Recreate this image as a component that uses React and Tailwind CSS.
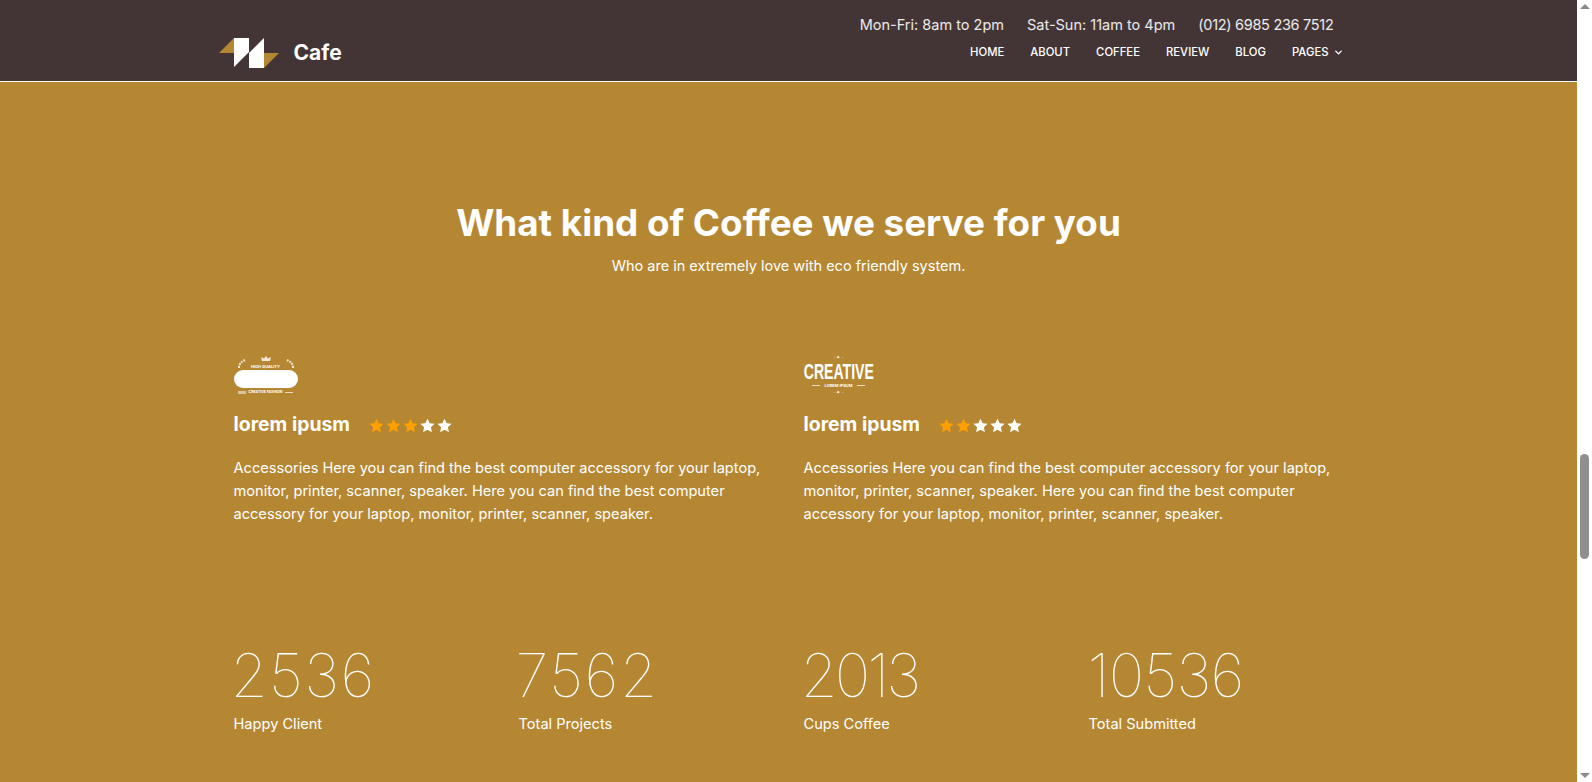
import React from 'react';
import { ChevronDown } from 'lucide-react';

const font = "font-['Inter','Liberation_Sans',sans-serif]";
const nav = ['HOME', 'ABOUT', 'COFFEE', 'REVIEW', 'BLOG'];
const stats = [
  ['2536', 'Happy Client', '-ml-[3px] tracking-[1.3px]'],
  ['7562', 'Total Projects', '-ml-[3px] tracking-[1.5px]'],
  ['2013', 'Cups Coffee', '-ml-[3px] tracking-[-3px]'],
  ['10536', 'Total Submitted', '-ml-[1px] tracking-[-0.8px]'],
];
const text =
  'Accessories Here you can find the best computer accessory for your laptop, monitor, printer, scanner, speaker. Here you can find the best computer accessory for your laptop, monitor, printer, scanner, speaker.';

function Logo() {
  return (
    <svg width="60" height="30" viewBox="0 0 60 30">
      <polygon points="0,15 15,0 15,15" fill="#b58733" />
      <polygon points="15,0 30,0 30,14 15,29" fill="#fff" />
      <polygon points="30,15 45,0 45,30 30,30" fill="#fff" />
      <polygon points="45,15 60,15 45,30" fill="#b58733" />
    </svg>
  );
}

function Star({ on }) {
  return (
    <svg width="15" height="15" viewBox="0 0 24 24" fill={on ? '#ff9f00' : '#fff'}>
      <path d="M12 1l3.4 7.3 7.9 1-5.8 5.5 1.5 7.900L12 18.8l-7 3.9 1.5-7.900L.7 9.3l7.9-1z" />
    </svg>
  );
}

function BadgeOne() {
  return (
    <div className="flex flex-col items-center w-[64px] h-[44px] text-white">
      <svg width="64" height="13" viewBox="0 0 64 13" fill="none" stroke="#fff">
        <path d="M5 13c0-4 2-6 6-8M59 13c0-4-2-6-6-8" strokeWidth="2" strokeDasharray="2 1" strokeOpacity="0.8" />
        <path d="M28 6l-1-4 3 1.500 2-2.500 2 2.500 3-1.500-1 4z" fill="#fff" fillOpacity="0.8" stroke="none" />
      </svg>
      <div className="text-[4px] leading-[4px] font-bold -mt-[3px] mb-[1px]">HIGH QUALITY</div>
      <div className="w-[64px] h-[18px] rounded-full bg-white shrink-0"></div>
      <div className="flex items-center justify-between w-[56px] mt-[2px]">
        <div className="w-[8px] h-[3px] bg-white/50"></div>
        <div className="text-[3.5px] leading-[4px] font-bold">CREATIVE FASHION</div>
        <div className="w-[8px] h-[1px] bg-white/70"></div>
      </div>
    </div>
  );
}

function BadgeTwo() {
  return (
    <div className="flex flex-col items-center w-[70px] h-[44px] text-white">
      <div className="text-[5px] leading-[5px]">· ✦ ·</div>
      <div className="font-['Liberation_Sans',sans-serif] font-bold text-[22px] leading-[21px] scale-x-[0.64] whitespace-nowrap mt-[1px]">CREATIVE</div>
      <div className="flex items-center gap-[5px] mt-[1px]">
        <div className="w-[8px] h-px bg-white/70"></div>
        <div className="text-[4px] leading-[5px] font-bold">LOREM IPSUM</div>
        <div className="w-[8px] h-px bg-white/70"></div>
      </div>
      <div className="text-[5px] leading-[6px] mt-[1px]">· ✦ ·</div>
    </div>
  );
}

function Feature({ badge, rating }) {
  return (
    <div className="w-[570px] px-[15px]">
      <div className="h-[44px] mt-[1px]">{badge}</div>
      <div className="flex items-center mt-[11px] h-[30px]">
        <h4 className="text-[19.4px] font-bold text-white w-[135px] whitespace-nowrap">lorem ipusm</h4>
        <div className="flex gap-[2px]">
          {[0, 1, 2, 3, 4].map((i) => (
            <Star key={i} on={i < rating} />
          ))}
        </div>
      </div>
      <p className="mt-[17px] text-[14.6px] leading-[23px] text-white">{text}</p>
    </div>
  );
}

export default function App() {
  return (
    <div className={`flex h-[782px] w-[1592px] overflow-hidden ${font}`}>
      <div className="flex-1 bg-[#b58733]">
        <header className="h-[82px] bg-[#433535] border-b border-white">
          <div className="w-[1140px] mx-auto flex justify-between">
            <div className="flex items-center pt-[37px] gap-[15px]">
              <Logo />
              <span className="text-white text-[21px] font-bold">Cafe</span>
            </div>
            <div className="pr-[15px]">
              <div className="flex justify-end gap-[23px] pt-[15px] pr-[10px] text-[14.5px] leading-[20px] text-white/90">
                <span>Mon-Fri: 8am to 2pm</span>
                <span>Sat-Sun: 11am to 4pm</span>
                <span className="tracking-[-0.3px]">(012) 6985 236 7512</span>
              </div>
              <nav className="flex justify-end items-center gap-[26px] mt-[8px] text-[11.3px] font-medium leading-[18px] text-white">
                {nav.map((n) => (
                  <span key={n}>{n}</span>
                ))}
                <span className="flex items-center gap-[4px]">
                  PAGES <ChevronDown size={11} strokeWidth={3} />
                </span>
              </nav>
            </div>
          </div>
        </header>
        <main className="w-[1140px] mx-auto">
          <div className="text-center pt-[116px]">
            <h2 className="text-[36.800px] leading-[50px] font-bold text-white">What kind of Coffee we serve for you</h2>
            <p className="text-[14.5px] leading-[24px] mt-[6px] text-white">Who are in extremely love with eco friendly system.</p>
          </div>
          <div className="flex mt-[76px]">
            <Feature badge={<BadgeOne />} rating={3} />
            <Feature badge={<BadgeTwo />} rating={2} />
          </div>
          <div className="flex mt-[114px]">
            {stats.map(([n, l, adjust]) => (
              <div key={l} className="w-[285px] px-[15px]">
                <div className={`text-[60px] leading-[70px] font-thin text-white ${adjust}`}>{n}</div>
                <div className="text-[14.6px] leading-[22px] mt-[3px] text-white">{l}</div>
              </div>
            ))}
          </div>
        </main>
      </div>
      <div className="w-[15px] bg-white flex flex-col items-center">
        <div className="mt-[4px] w-0 h-0 border-x-[5px] border-x-transparent border-b-[5px] border-b-[#8a8a8a]"></div>
        <div className="w-[9px] h-[105px] mt-[445px] rounded-full bg-[#8f8f8f]"></div>
        <div className="mt-auto mb-[4px] w-0 h-0 border-x-[5px] border-x-transparent border-t-[5px] border-t-[#8a8a8a]"></div>
      </div>
    </div>
  );
}
